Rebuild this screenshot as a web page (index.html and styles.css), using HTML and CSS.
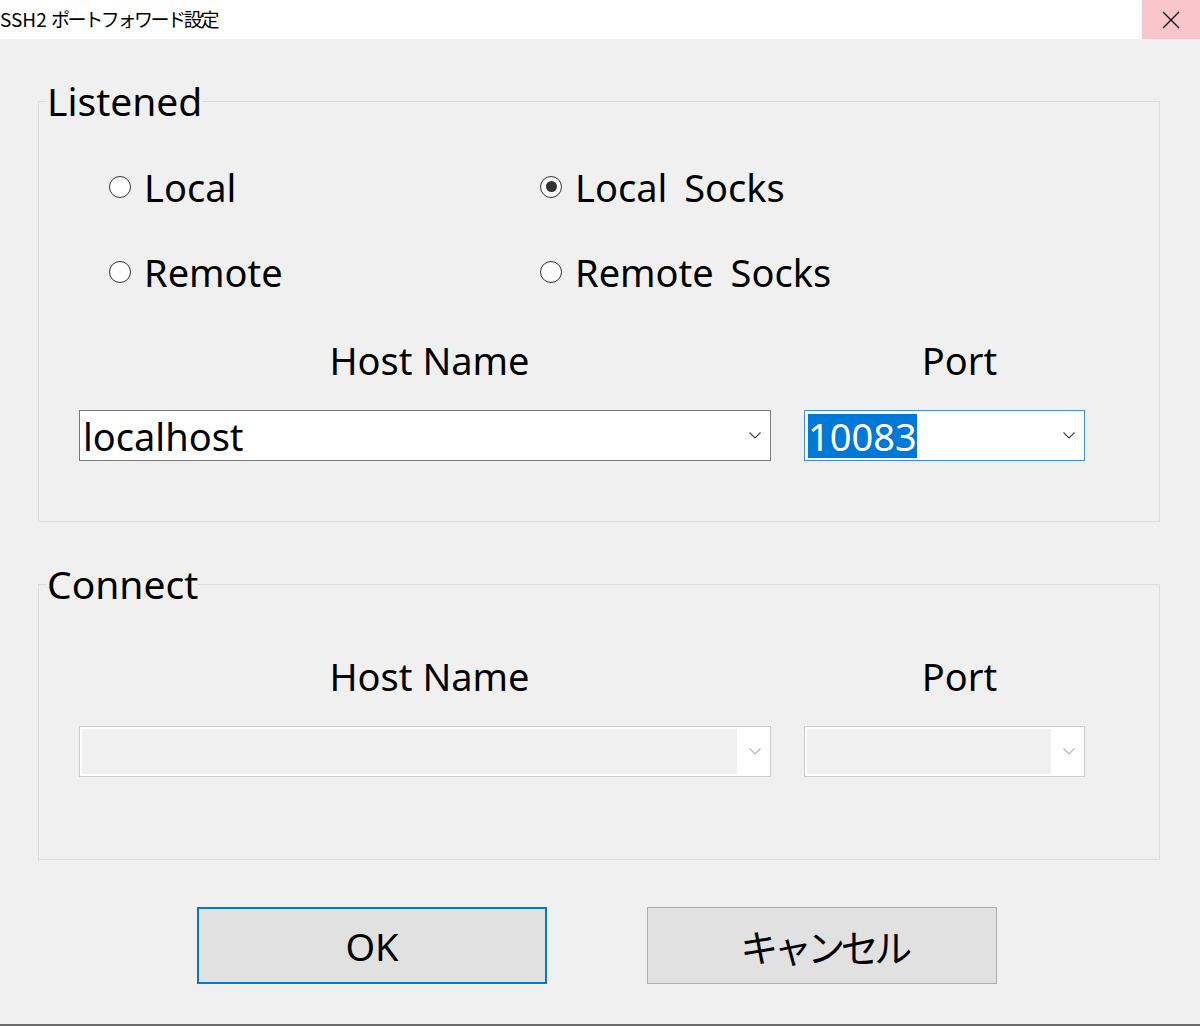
FILE: index.html
```html
<!DOCTYPE html>
<html lang="ja">
<head>
<meta charset="UTF-8">
<title>SSH2 ポートフォワード設定</title>
<link rel="stylesheet" href="styles.css">
</head>
<body>
<div class="window">
    <div class="titlebar">
        <div class="title">SSH2 <span class="kana">ポートフォワード設定</span></div>
        <div class="close">
            <svg width="18" height="18" viewBox="0 0 18 18"><path d="M1 1 L17 17 M17 1 L1 17" stroke="#111" stroke-width="1.4" fill="none"/></svg>
        </div>
    </div>

    <fieldset class="group listened">
        <legend>Listened</legend>
        <div class="radios">
            <label class="radio"><span class="dot"></span>Local</label>
            <label class="radio"><span class="dot on"></span>Local Socks</label>
            <label class="radio"><span class="dot"></span>Remote</label>
            <label class="radio"><span class="dot"></span>Remote Socks</label>
        </div>
        <div class="fields">
            <div class="lbl host">Host Name</div>
            <div class="lbl port">Port</div>
            <div class="combo">
                <span class="val">localhost</span>
                <svg class="chev" width="12" height="7" viewBox="0 0 12 7"><path d="M0.5 0.5 L6 6 L11.5 0.5" stroke="#444" stroke-width="1.2" fill="none"/></svg>
            </div>
            <div class="combo focus">
                <span class="val sel">10083</span>
                <svg class="chev" width="12" height="7" viewBox="0 0 12 7"><path d="M0.5 0.5 L6 6 L11.5 0.5" stroke="#444" stroke-width="1.2" fill="none"/></svg>
            </div>
        </div>
    </fieldset>

    <fieldset class="group connect">
        <legend>Connect</legend>
        <div class="fields">
            <div class="lbl host">Host Name</div>
            <div class="lbl port">Port</div>
            <div class="combo off">
                <span class="fill"></span>
                <svg class="chev" width="12" height="7" viewBox="0 0 12 7"><path d="M0.5 0.5 L6 6 L11.5 0.5" stroke="#b4b4b4" stroke-width="1.2" fill="none"/></svg>
            </div>
            <div class="combo off">
                <span class="fill"></span>
                <svg class="chev" width="12" height="7" viewBox="0 0 12 7"><path d="M0.5 0.5 L6 6 L11.5 0.5" stroke="#b4b4b4" stroke-width="1.2" fill="none"/></svg>
            </div>
        </div>
    </fieldset>

    <div class="buttons">
        <button class="btn default">OK</button>
        <button class="btn jp">キャンセル</button>
    </div>
</div>
</body>
</html>
```

FILE: styles.css
```css
body {
    margin: 0;
    background-color: #f0f0f0;
    font-family: "Noto Sans", "Noto Sans CJK JP", sans-serif;
    color: #000;
}

.window {
    height: 1026px;
    box-sizing: border-box;
    border-bottom: 2px solid #6b6b6b;
    overflow: hidden;
}

.titlebar {
    height: 39px;
    background-color: #fff;
    display: flex;
    justify-content: space-between;
    align-items: center;
}
.title {
    font-family: "Noto Sans CJK JP", sans-serif;
    font-size: 19px;
    margin-top: -2px;
}
.title .kana {
    letter-spacing: -2.4px;
}
.close {
    width: 58px;
    height: 39px;
    background-color: #f8c6ca;
    display: flex;
    justify-content: center;
    align-items: center;
}

.group {
    margin: 0 0 0 38px;
    width: 1122px;
    box-sizing: border-box;
    padding: 0;
    border: 1px solid #dcdcdc;
    min-width: 0;
}
.group legend {
    font-size: 39px;
    line-height: 46px;
    padding: 0;
    margin-left: 8px;
}
.listened {
    margin-top: 39px;
    padding-bottom: 60px;
}
.connect {
    margin-top: 39px;
    padding-bottom: 82px;
}

.radios {
    display: grid;
    grid-template-columns: 431px auto;
    grid-auto-rows: 85px;
    padding: 20px 0 0 70px;
}
.radio {
    display: flex;
    align-items: center;
    font-size: 38px;
    word-spacing: 7px;
}
.dot {
    width: 20px;
    height: 20px;
    border: 1.5px solid #333;
    border-radius: 50%;
    background-color: #fff;
    margin-right: 13px;
    display: flex;
    justify-content: center;
    align-items: center;
}
.dot.on::after {
    content: "";
    width: 11px;
    height: 11px;
    border-radius: 50%;
    background-color: #333;
}

.fields {
    display: grid;
    grid-template-columns: 692px 281px;
    column-gap: 33px;
    padding-left: 40px;
}
.listened .fields {
    padding-top: 23px;
}
.connect .fields {
    padding-top: 46px;
}
.lbl {
    font-size: 38px;
    line-height: 46px;
    text-align: center;
    margin-bottom: 27px;
}
.lbl.host {
    padding-left: 9px;
}
.lbl.port {
    padding-left: 30px;
}

.combo {
    height: 51px;
    box-sizing: border-box;
    border: 1px solid #7a7a7a;
    background-color: #fff;
    display: flex;
    align-items: center;
    justify-content: space-between;
    padding: 0 9px 0 3px;
    font-size: 38px;
}
.combo.focus {
    border-color: #3a8ee6;
}
.val.sel {
    background-color: #0078d7;
    color: #fff;
    line-height: 44px;
}
.combo.off {
    border-color: #cccccc;
    padding: 2px 9px 2px 2px;
    align-items: stretch;
}
.combo.off .fill {
    flex: 1;
    background-color: #f0f0f0;
    margin-right: 12px;
}
.combo.off .chev {
    align-self: center;
}

.buttons {
    display: flex;
    gap: 100px;
    padding-left: 197px;
    margin-top: 47px;
}
.btn {
    width: 350px;
    height: 77px;
    background-color: #e1e1e1;
    border: 1px solid #adadad;
    font-family: "Noto Sans", "Noto Sans CJK JP", sans-serif;
    font-size: 38px;
    color: #000;
    padding: 0;
}
.btn.jp {
    letter-spacing: -4.5px;
    text-indent: 4px;
}
.btn.default {
    border: 2px solid #0078d7;
}
```
